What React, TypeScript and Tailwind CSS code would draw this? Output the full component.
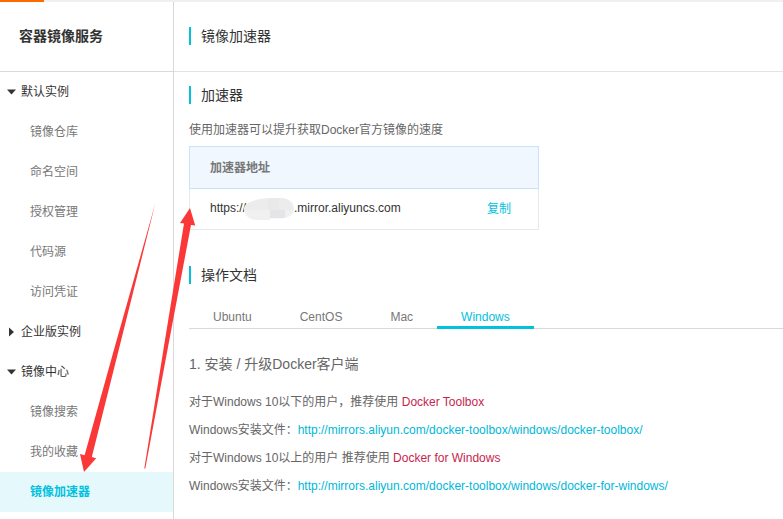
import { useState } from "react";
import clsx from "clsx";

const groups = [
  { name: "默认实例", open: true, items: ["镜像仓库", "命名空间", "授权管理", "代码源", "访问凭证"] },
  { name: "企业版实例", open: false, items: [] },
  { name: "镜像中心", open: true, items: ["镜像搜索", "我的收藏", "镜像加速器"] },
];

const tabs = ["Ubuntu", "CentOS", "Mac", "Windows"];

const docs = [
  {
    intro: "对于Windows 10以下的用户，推荐使用",
    product: "Docker Toolbox",
    url: "http://mirrors.aliyun.com/docker-toolbox/windows/docker-toolbox/",
  },
  {
    intro: "对于Windows 10以上的用户 推荐使用",
    product: "Docker for Windows",
    url: "http://mirrors.aliyun.com/docker-toolbox/windows/docker-for-windows/",
  },
];

function Caret({ open }: { open: boolean }) {
  return (
    <svg viewBox="0 0 10 10" className="w-[10px] h-[10px] shrink-0" fill="#333" aria-hidden="true">
      <path d={open ? "M0 2.500h9L4.500 7.500z" : "M2 0.500v9L7 5z"} />
    </svg>
  );
}

function SectionTitle({ children }: { children: string }) {
  return <h2 className="border-l-2 border-[#00c1de] pl-[10px] text-sm leading-[18px] text-[#333]">{children}</h2>;
}

// blurred-out account id inside the mirror address
function HiddenId() {
  return (
    <svg viewBox="0 0 50 22" className="inline-block -ml-[2px] w-[50px] h-[22px] align-middle" aria-hidden="true">
      <path d="M7 4C14 0 24 0 36 0c9 0 14 4 14 11 0 6-5 9-14 9.500H26V22H13C5 22 0 17 0 11 0 8 3 5 7 4z" fill="#f0f0f0" />
      <path d="M24 0h11v12H24z" fill="#e9e9ea" />
      <path d="M26 12h15v8H26z" fill="#e5e5e7" />
      <path d="M35 0c9 0 14 4 14.500 12H35z" fill="#ececec" />
      <path d="M7 4c5-2 10-3 17-3.500V12H0C0 8 3 5 7 4z" fill="#ececec" />
    </svg>
  );
}

function Arrows() {
  return (
    <svg width="200" height="480" viewBox="0 0 200 480" className="absolute left-0 top-0 pointer-events-none" fill="#fb3838" aria-hidden="true">
      <path d="M155.3 203.5L119.7 346 91.8 457l4.4 1.2L84 472l-4-18 4.600 1.200L115 346z" />
      <path d="M144.3 468.5L164 346l20-122.500-4-0.500 10-15 5.200 17.500-4.200-0.500L168.200 346l-22.900 122.500z" />
    </svg>
  );
}

export default function App() {
  const [active, setActive] = useState("镜像加速器");
  const [tab, setTab] = useState("Windows");

  return (
    <div className="relative min-h-screen flex flex-col bg-white text-xs text-[#666] font-['Liberation_Sans','Noto_Sans_CJK_SC',sans-serif]">
      <div className="h-[2px] bg-[#f0f0f0]">
        <div className="w-11 h-[2px] bg-[#ff6a00]" />
      </div>

      <div className="flex flex-1">
        {/* Sidebar */}
        <nav className="w-[174px] shrink-0 border-r border-[#d9d9d9]">
          <h1 className="h-[70px] flex items-center border-b border-[#d9d9d9] pl-[19px] pb-[2px] text-sm font-bold text-[#333]">容器镜像服务</h1>
          {groups.map((g) => (
            <div key={g.name}>
              <button className="w-full h-10 flex items-center gap-1 pl-[7px] text-[#333]" aria-expanded={g.open}>
                <Caret open={g.open} />
                {g.name}
              </button>
              {g.items.map((item) => (
                <button
                  key={item}
                  onClick={() => setActive(item)}
                  className={clsx(
                    "block w-full h-10 pl-[30px] text-left",
                    active === item ? "bg-[#e5f8fc] font-bold text-[#00c1de]" : "text-[#777]",
                  )}
                >
                  {item}
                </button>
              ))}
            </div>
          ))}
        </nav>

        <main className="flex-1 min-w-0">
          <header className="h-[70px] flex items-center border-b border-[#e3e3e3] pl-[15px] pb-[2px]">
            <SectionTitle>镜像加速器</SectionTitle>
          </header>

          <div className="pl-[15px] pt-[14px]">
            <SectionTitle>加速器</SectionTitle>
            <p className="mt-4 leading-5">使用加速器可以提升获取Docker官方镜像的速度</p>

            <table className="mt-[6px] w-[350px] border-collapse text-left">
              <thead>
                <tr className="h-[42px] bg-[#f0f7ff] border border-[#c9e3fc]">
                  <th colSpan={2} className="pl-5 font-bold text-[#777]">加速器地址</th>
                </tr>
              </thead>
              <tbody>
                <tr className="h-[41px] border border-[#e5e8ed]">
                  <td className="pl-5 text-[#333] whitespace-nowrap">
                    https://
                    <HiddenId />
                    .mirror.aliyuncs.com
                  </td>
                  <td className="pr-[27px] text-right">
                    <button className="text-[#00c1de]">复制</button>
                  </td>
                </tr>
              </tbody>
            </table>

            <div className="mt-9">
              <SectionTitle>操作文档</SectionTitle>
            </div>

            <div role="tablist" className="mt-5 h-[25px] flex border-b border-[#d9d9d9]">
              {tabs.map((t) => (
                <button
                  key={t}
                  role="tab"
                  aria-selected={tab === t}
                  onClick={() => setTab(t)}
                  className={clsx(
                    "h-[25px] px-6 pt-1 border-b-[3px] leading-[18px]",
                    tab === t ? "border-[#00c1de] text-[#00c1de]" : "border-transparent text-[#777]",
                  )}
                >
                  {t}
                </button>
              ))}
            </div>

            <h3 className="mt-[25px] text-sm">1. 安装 / 升级Docker客户端</h3>
            <div className="mt-[14px] leading-7">
              {docs.map((d) => (
                <div key={d.url}>
                  <p>
                    {d.intro} <span className="text-[#c7254e]">{d.product}</span>
                  </p>
                  <p>
                    Windows安装文件：<a href={d.url} className="text-[#00b7d8]">{d.url}</a>
                  </p>
                </div>
              ))}
            </div>
          </div>
        </main>
      </div>

      <Arrows />
    </div>
  );
}
